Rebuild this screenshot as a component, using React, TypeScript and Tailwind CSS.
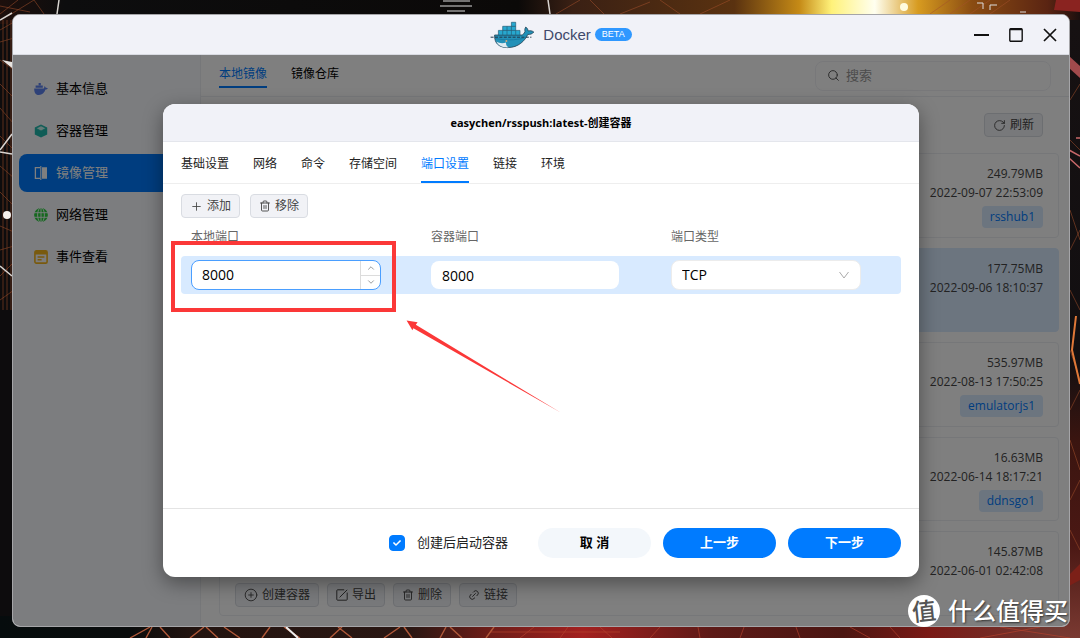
import { useState } from "react"
import type { ReactNode } from "react"
import {
  ChevronDown,
  ChevronUp,
  CirclePlus,
  Link2,
  Plus,
  RotateCw,
  Search,
  Trash2,
} from "lucide-react"
import { FaCheck } from "react-icons/fa"

const images = [
  { size: "249.79MB", date: "2022-09-07 22:53:09", container: "rsshub1" },
  { size: "177.75MB", date: "2022-09-06 18:10:37", selected: true },
  { size: "535.97MB", date: "2022-08-13 17:50:25", container: "emulatorjs1" },
  { size: "16.63MB", date: "2022-06-14 18:17:21", container: "ddnsgo1" },
  { size: "145.87MB", date: "2022-06-01 02:42:08", actions: true },
]

const menu = [
  { name: "基本信息", icon: <WhaleIcon /> },
  { name: "容器管理", icon: <CubeIcon /> },
  { name: "镜像管理", icon: <MirrorIcon />, active: true },
  { name: "网络管理", icon: <GlobeIcon /> },
  { name: "事件查看", icon: <EventIcon /> },
]

const tabs = ["基础设置", "网络", "命令", "存储空间", "端口设置", "链接", "环境"]

function WhaleIcon() {
  return (
    <svg width="14" height="14" viewBox="0 0 14 14" fill="#5d82f0">
      <path d="M.2 6.4H9.8C10.3 5.8 10.4 5 10.2 4.2 11 4.4 11.6 5 11.7 5.8 12.4 5.6 13.2 5.8 13.8 6.2 13.4 7.2 12.4 7.6 11.5 7.6 10.4 11.2 8 13 5 13 1.8 13 .1 10.6.2 6.4Z" />
      <path d="M1.6 3.6H8.8V5.8H1.6ZM4.6 1H6.8V3.2H4.6Z" />
    </svg>
  )
}

function CubeIcon() {
  return (
    <svg width="14" height="14" viewBox="0 0 14 14">
      <path d="M7 .6 13.2 3.6V10.4L7 13.6.8 10.4V3.6Z" fill="#1fb8ac" />
      <path d="M7 1.8 12 4.3 7 7 2 4.3Z" fill="#c9f5ef" />
      <path d="M7 1.8 12 4.3 7 7 2 4.3Z" fill="none" stroke="#1fb8ac" strokeWidth=".8" />
    </svg>
  )
}

function MirrorIcon() {
  return (
    <svg width="14" height="14" viewBox="0 0 14 14">
      <path d="M6 1.6H1.4V12.4H6" fill="none" stroke="#fff" strokeWidth="1.3" />
      <path d="M8 1.2H13V12.8H8Z" fill="#fff" />
      <path d="M6.8 0V14" stroke="#fff" strokeWidth="1.1" />
    </svg>
  )
}

function GlobeIcon() {
  return (
    <svg width="14" height="14" viewBox="0 0 14 14">
      <circle cx="7" cy="7" r="6.9" fill="#2cd13f" />
      <g fill="none" stroke="#f8faff" strokeWidth=".9">
        <path d="M0 4.7H14M0 9.3H14M7 0V14" />
        <ellipse cx="7" cy="7" rx="3.4" ry="7.4" />
      </g>
    </svg>
  )
}

function EventIcon() {
  return (
    <svg width="14" height="14" viewBox="0 0 14 14">
      <rect x=".9" y=".9" width="12.2" height="12.2" rx="1.4" fill="none" stroke="#f2b41c" strokeWidth="1.6" />
      <path d="M1 1H13V4.6H1Z" fill="#f2b41c" />
      <path d="M3.6 7H10.4M3.6 9.8H7.6" stroke="#f2b41c" strokeWidth="1.4" />
    </svg>
  )
}

function ExportIcon() {
  return (
    <svg width="12" height="12" viewBox="0 0 12 12" fill="none" stroke="currentColor" strokeWidth="1">
      <path d="M8.2.8H1.6A.8.8 0 0 0 .8 1.6V10.4A.8.8 0 0 0 1.6 11.2H10.4A.8.8 0 0 0 11.2 10.4V3.6" />
      <path d="M3.6 8.4 11.2.8" />
    </svg>
  )
}

function DockerLogo() {
  return (
    <svg width="45" height="28" viewBox="0 0 45 28">
      <path
        d="M4.6 14H32.2C33.6 13.2 34.4 12 35 10.6 34.6 9 34.8 7.2 35.8 6 37.2 7 38 8.6 38.2 10 40 9.4 42.2 9.8 43.8 11 42.4 13 40 13.6 37.8 13.4 35 19.6 28.6 26.6 17.6 26.6 9.4 26.6 4.2 22.6 4.6 14Z"
        fill="#2391b8"
        stroke="#254356"
        strokeWidth=".8"
      />
      <path d="M6.4 20.6C9 22.4 13.4 22.6 16 21.4 15.8 24 17 25.6 19 26.3 12.6 26.9 8.2 24.8 6.4 20.6Z" fill="#dfeaf0" />
      <path d="M5 17.4C14 19.4 25 19.4 34.4 17" stroke="#1a7ba2" fill="none" />
      <circle cx="16.4" cy="20" r="1" fill="#d5a878" />
      <g fill="#27a8cf" stroke="#22607a" strokeWidth=".7">
        <path d="M8.4 9.4H30V14H8.4Z" />
        <path d="M12.7 5.3H25.7V9.4H12.7Z" />
        <path d="M21.4 1.3H25.7V5.3H21.4Z" />
        <path d="M12.7 9.4V14M17 5.3V14M21.4 5.3V14M25.7 9.4V14" />
      </g>
      <path d="M.6 16.2H41.4" stroke="#20384a" strokeWidth="1" strokeDasharray="3 1.4" />
    </svg>
  )
}

function Wallpaper() {
  return (
    <svg
      className="absolute inset-0 h-full w-full"
      viewBox="0 0 1080 638"
      preserveAspectRatio="none"
      aria-hidden="true">
      <defs>
        <linearGradient id="top">
          <stop offset="0" stopColor="#1d0f0c" />
          <stop offset=".06" stopColor="#0d0d0e" />
          <stop offset=".48" stopColor="#0b0908" />
          <stop offset=".53" stopColor="#3a2014" />
          <stop offset=".68" stopColor="#5a3210" />
          <stop offset=".74" stopColor="#c58a16" />
          <stop offset=".77" stopColor="#fff27a" />
          <stop offset=".81" stopColor="#fffff0" />
          <stop offset=".85" stopColor="#d79b20" />
          <stop offset=".9" stopColor="#8a4c12" />
          <stop offset=".97" stopColor="#5a2412" />
          <stop offset="1" stopColor="#1c0f0e" />
        </linearGradient>
        <linearGradient id="bottom">
          <stop offset="0" stopColor="#060c0d" />
          <stop offset=".12" stopColor="#0a0c0c" />
          <stop offset=".18" stopColor="#231410" />
          <stop offset=".38" stopColor="#2a1713" />
          <stop offset=".45" stopColor="#6b1d18" />
          <stop offset=".54" stopColor="#a3201f" />
          <stop offset=".66" stopColor="#5c1a17" />
          <stop offset=".78" stopColor="#4b1612" />
          <stop offset=".86" stopColor="#7a1a16" />
          <stop offset="1" stopColor="#6e4038" />
        </linearGradient>
        <linearGradient id="right" x2="0" y2="1">
          <stop offset="0" stopColor="#161112" />
          <stop offset=".55" stopColor="#120f11" />
          <stop offset=".68" stopColor="#3a1510" />
          <stop offset=".85" stopColor="#4b1814" />
          <stop offset="1" stopColor="#7a3a32" />
        </linearGradient>
      </defs>
      <path d="M0 0H1080V638H0Z" fill="#0d0c0d" />
      <path d="M0 0H1080V24H0Z" fill="url(#top)" />
      <path d="M0 616H1080V638H0Z" fill="url(#bottom)" />
      <path d="M1060 20H1080V638H1060Z" fill="url(#right)" />
      <g fill="none" stroke="#a4502c" strokeWidth=".7" opacity=".75">
        <path d="M0 30 14 22M0 42 14 38M0 60 14 70M0 84 14 98M0 108 14 124M0 136 14 150M0 166 14 178M0 192 14 206M0 226 14 232M0 250 14 246M0 276 14 262M0 300 14 290M3 20V310M7 20V310M11 20V310" />
        <path d="M0 14 18 0M8 16 34 0M34 0 44 14M0 6 30 12M556 14 580 0M590 0 604 14M620 14 650 2M660 0 680 14M700 14 730 0M930 14 950 0M950 14 970 0M970 14 990 0M990 14 1010 0" />
        <path d="M1070 100 1080 84M1070 140 1080 150M1070 210 1080 240M1070 250 1080 230M1070 290 1080 310M1070 350 1080 380M1070 410 1080 390M1070 440 1080 470M1070 500 1080 480M1070 530 1080 550" />
      </g>
      <path
        d="M130 638 150 627M146 638 152 627M170 638 160 627M190 638 204 627M218 638 206 627M240 638 224 627M262 638 270 627M300 638 284 627M330 638 342 627M352 638 338 627M384 638 400 627M412 638 404 627M440 638 446 627M462 638 450 627M486 638 494 627"
        stroke="#b0593a"
        strokeWidth="1.4"
      />
      <path
        d="M520 638 534 627M560 638 568 627M600 627 612 638M650 638 660 627M700 638 698 627M744 627 740 638M800 638 796 627M850 627 870 638M900 638 890 627M490 632H620M980 638 1040 627M1000 627 1070 638"
        stroke="#b8442f"
        strokeWidth=".8"
        opacity=".8"
      />
      <path d="M286 627 298 638" stroke="#eee" strokeWidth="2" />
      <path d="M59 0 57 14M548 0 550 14M0 20 12 13M0 150 12 134M0 152 12 154M0 266 12 276" stroke="#d8d4d0" strokeWidth="1.5" />
      <path d="M443 1H470M440 6H472M447 11H465M977 3H983V9M990 10V5H997M1020 12H1026" fill="none" stroke="#ddd" strokeWidth="1" />
      <path d="M2 60 12 62V68Z" fill="#e8e4e0" />
      <circle cx="7" cy="215" r="4" fill="#f4f0ec" />
      <circle cx="904" cy="7" r="4" fill="#fffbe0" />
      <path d="M1056 0H1080V12L1054 10Z" fill="#8a2320" />
      <path d="M1069 56 1080 66V78L1069 68Z" fill="#a14a4c" />
      <path d="M1069 150 1080 156M1069 158 1080 168M1076 138H1080" stroke="#c8686a" strokeWidth="1.5" />
      <path d="M1076 316 1072 350 1080 384" stroke="#e07838" strokeWidth="2" fill="none" />
      <path d="M1069 575 1080 564V580L1069 586Z" fill="#7c2018" />
    </svg>
  )
}

function ToolButton({ icon, children }: { icon: ReactNode; children: ReactNode }) {
  return (
    <button className="flex h-6 items-center gap-1 rounded border border-[#d9dce2] bg-[#f1f2f6] px-2 text-xs text-[#444]">
      {icon}
      {children}
    </button>
  )
}

function TitleBar() {
  return (
    <header className="relative flex h-10 items-center justify-center gap-2 border-b border-[#d9dbe2] bg-[#f1f2f8] pl-10">
      <DockerLogo />
      <div className="flex items-center gap-1 font-['Liberation_Sans',sans-serif]">
        <h1 className="text-[15px] leading-5 text-[#40496b]">Docker</h1>
        <span className="rounded-full bg-[#2f98ff] px-[7px] text-[9px] leading-[13px] text-white">
          BETA
        </span>
      </div>
      <div className="absolute right-3 flex items-center gap-5 text-[#111]">
        <button aria-label="最小化">
          <svg width="15" height="14" viewBox="0 0 15 14">
            <path d="M0 7H15" stroke="currentColor" strokeWidth="2" />
          </svg>
        </button>
        <button aria-label="最大化">
          <svg width="14" height="14" viewBox="0 0 14 14" fill="none" stroke="currentColor">
            <rect x=".8" y=".8" width="12.4" height="12.4" rx="1" strokeWidth="1.4" />
            <path d="M1 1.4H13" strokeWidth="1.6" />
          </svg>
        </button>
        <button aria-label="关闭">
          <svg width="14" height="14" viewBox="0 0 14 14">
            <path d="M1 1 13 13M13 1 1 13" stroke="currentColor" strokeWidth="1.7" />
          </svg>
        </button>
      </div>
    </header>
  )
}

function Sidebar() {
  return (
    <nav className="flex w-[188px] shrink-0 flex-col gap-1 border-r border-[#eceef2] bg-[#f8faff] px-1.5 pt-[15px]">
      {menu.map((item) => (
        <a
          key={item.name}
          href="#"
          className={
            item.active
              ? "flex h-[38px] items-center gap-2 rounded-lg bg-[#007bff] px-[15px] text-[13px] text-white"
              : "flex h-[38px] items-center gap-2 rounded-lg px-[15px] text-[13px] text-black"
          }>
          {item.icon}
          {item.name}
        </a>
      ))}
    </nav>
  )
}

function ImageList() {
  return (
    <main className="flex min-w-0 flex-1 flex-col bg-white">
      <div className="flex h-[42px] items-center justify-between border-b border-[#eceef2] px-[18px]">
        <div className="flex gap-6 self-stretch text-xs">
          <button className="mt-2.5 mb-2 border-b-2 border-[#007bff] pb-1 text-[#007bff]">本地镜像</button>
          <button className="mt-2.5 mb-2 border-b-2 border-transparent pb-1 text-black">镜像仓库</button>
        </div>
        <label className="flex h-[30px] w-[236px] items-center gap-1.5 rounded-lg border border-[#f0f1f5] px-[11px] text-[#555]">
          <Search size={13} strokeWidth={1.8} />
          <input
            aria-label="搜索"
            placeholder="搜索"
            className="min-w-0 flex-1 bg-transparent text-[13px] outline-none placeholder:text-[#999]"
          />
        </label>
      </div>
      <div className="flex flex-1 flex-col pr-2.5 pb-2.5 pl-[18px]">
        <div className="flex justify-end py-4 pr-4">
          <ToolButton icon={<RotateCw size={13} strokeWidth={1.6} />}>刷新</ToolButton>
        </div>
        <ul className="flex flex-1 flex-col gap-2.5">
          {images.map((image) => (
            <li
              key={image.date}
              className={
                image.selected
                  ? "flex min-h-[84px] flex-1 items-end rounded border border-[#d8eaff] bg-[#d8eaff] px-[15px] pt-2.5 pb-2"
                  : "flex min-h-[84px] flex-1 items-end rounded border border-[#eceef2] px-[15px] pt-2.5 pb-2"
              }>
              {image.actions && (
                <div className="flex gap-2">
                  <ToolButton icon={<CirclePlus size={14} strokeWidth={1.5} />}>创建容器</ToolButton>
                  <ToolButton icon={<ExportIcon />}>导出</ToolButton>
                  <ToolButton icon={<Trash2 size={12} strokeWidth={1.8} />}>删除</ToolButton>
                  <ToolButton icon={<Link2 size={12} strokeWidth={1.8} className="-rotate-45" />}>
                    链接
                  </ToolButton>
                </div>
              )}
              <div className="ml-auto flex flex-col items-end self-start text-xs leading-[19px] text-[#444]">
                <span>{image.size}</span>
                <span>{image.date}</span>
                {image.container && (
                  <span className="mt-1 rounded bg-[#d8eaff] px-2 leading-[22px] text-[#007bff]">
                    {image.container}
                  </span>
                )}
              </div>
            </li>
          ))}
        </ul>
      </div>
    </main>
  )
}

function PortTable() {
  const [localPort, setLocalPort] = useState(8000)

  return (
    <table className="w-full table-fixed border-separate border-spacing-0 text-left">
      <thead>
        <tr className="h-[38px] text-xs text-[#666]">
          <th className="px-2.5 font-normal">本地端口</th>
          <th className="px-2.5 font-normal">容器端口</th>
          <th className="px-2.5 font-normal">端口类型</th>
        </tr>
      </thead>
      <tbody>
        <tr className="h-[38px] bg-[#d8eaff] text-black">
          <td className="rounded-l px-2.5">
            <div className="flex h-[30px] w-[190px] overflow-hidden rounded-lg border border-[#4a9eff] bg-white">
              <input
                aria-label="本地端口"
                inputMode="numeric"
                value={localPort}
                onChange={(e) => setLocalPort(Number(e.target.value) || 0)}
                className="min-w-0 flex-1 px-2.5 text-sm outline-none"
              />
              <div className="flex w-5 flex-col divide-y divide-[#dcdcdc] border-l border-[#dcdcdc] text-[#888]">
                <button
                  aria-label="增加"
                  onClick={() => setLocalPort(localPort + 1)}
                  className="flex flex-1 items-center justify-center">
                  <ChevronUp size={10} />
                </button>
                <button
                  aria-label="减少"
                  onClick={() => setLocalPort(localPort - 1)}
                  className="flex flex-1 items-center justify-center">
                  <ChevronDown size={10} />
                </button>
              </div>
            </div>
          </td>
          <td className="px-2.5">
            <input
              aria-label="容器端口"
              defaultValue="8000"
              className="block h-7 w-[188px] rounded-lg bg-white px-[11px] text-sm outline-none"
            />
          </td>
          <td className="rounded-r px-2.5">
            <div className="relative w-[190px]">
              <select
                aria-label="端口类型"
                className="block h-[30px] w-full appearance-none rounded-lg border border-[#ececec] bg-white px-2.5 text-sm outline-none">
                <option>TCP</option>
                <option>UDP</option>
              </select>
              <svg
                className="pointer-events-none absolute top-[11px] right-3"
                width="10"
                height="8"
                viewBox="0 0 10 8"
                fill="none"
                stroke="#aaa">
                <path d="M.5 1 5 7 9.5 1" />
              </svg>
            </div>
          </td>
        </tr>
      </tbody>
    </table>
  )
}

function Annotation() {
  return (
    <>
      <div className="pointer-events-none absolute top-[137px] left-2 h-[71px] w-[225px] border-4 border-[#fb3838]" />
      <svg
        className="pointer-events-none absolute top-[216px] left-[243px]"
        width="156"
        height="94"
        viewBox="0 0 156 94">
        <path d="M.6.6 11.6 2.2 9.8 4.8 155 92.8 7.4 8.2 6.4 10.2Z" fill="#fb3838" />
      </svg>
    </>
  )
}

function CreateDialog() {
  return (
    <section
      role="dialog"
      aria-label="创建容器"
      className="relative flex w-full max-w-[756px] flex-col overflow-hidden rounded-xl bg-white shadow-[0_6px_20px_rgba(0,0,0,0.4)]">
      <h2 className="border-b border-[#e4e6ec] bg-[#f1f2f8] text-center text-[11px] leading-[37px] font-bold text-black">
        easychen/rsspush:latest-创建容器
      </h2>
      <div className="flex h-[42px] gap-6 border-b border-[#eee] px-[18px] text-xs">
        {tabs.map((tab) => (
          <button
            key={tab}
            className={
              tab === "端口设置"
                ? "border-b-2 border-[#007bff] pt-1 text-[#007bff]"
                : "border-b-2 border-transparent pt-1 text-[#222]"
            }>
            {tab}
          </button>
        ))}
      </div>
      <div className="min-h-[324px] px-[18px] pt-2.5">
        <div className="flex gap-2.5">
          <ToolButton icon={<Plus size={13} strokeWidth={1.6} />}>添加</ToolButton>
          <ToolButton icon={<Trash2 size={12} strokeWidth={1.8} />}>移除</ToolButton>
        </div>
        <PortTable />
      </div>
      <footer className="flex h-[69px] items-center justify-end gap-3 border-t border-[#e4e4e4] px-[18px] text-[13px]">
        <label className="mr-[18px] flex items-center gap-3 text-[#222]">
          <span className="relative flex h-4 w-4">
            <input
              type="checkbox"
              defaultChecked
              className="peer h-4 w-4 appearance-none rounded border border-[#007bff] checked:bg-[#007bff]"
            />
            <FaCheck
              size={8}
              className="pointer-events-none absolute top-1 left-1 hidden text-white peer-checked:block"
            />
          </span>
          创建后启动容器
        </label>
        <button className="h-[30px] w-[113px] rounded-full bg-[#f3f7fb] font-bold text-black">取 消</button>
        <button className="h-[30px] w-[113px] rounded-full bg-[#007bff] font-bold text-white">上一步</button>
        <button className="h-[30px] w-[113px] rounded-full bg-[#007bff] font-bold text-white">下一步</button>
      </footer>
      <Annotation />
    </section>
  )
}

function Watermark() {
  return (
    <div className="absolute right-3 bottom-[11px] flex items-center gap-2 text-2xl leading-8 text-white">
      <span className="flex h-8 w-8 items-center justify-center rounded-full bg-white text-[#555]">
        <span className="-rotate-6 font-medium">值</span>
      </span>
      <span className="font-medium text-shadow-[1px_1px_2px_rgba(0,0,0,0.6)]">什么值得买</span>
    </div>
  )
}

export default function App() {
  return (
    <div className="relative flex min-h-screen flex-col overflow-hidden bg-[#0d0c0d] pt-3.5 pr-2.5 pb-[11px] pl-3 font-['Open_Sans','Noto_Sans_CJK_SC',sans-serif]">
      <Wallpaper />
      <div className="relative flex flex-1 flex-col overflow-hidden rounded-lg border border-[#a5a5a8] bg-white">
        <TitleBar />
        <div className="relative flex flex-1">
          <Sidebar />
          <ImageList />
          <div className="absolute inset-0 flex items-center justify-center bg-black/50">
            <CreateDialog />
          </div>
        </div>
      </div>
      <Watermark />
    </div>
  )
}
